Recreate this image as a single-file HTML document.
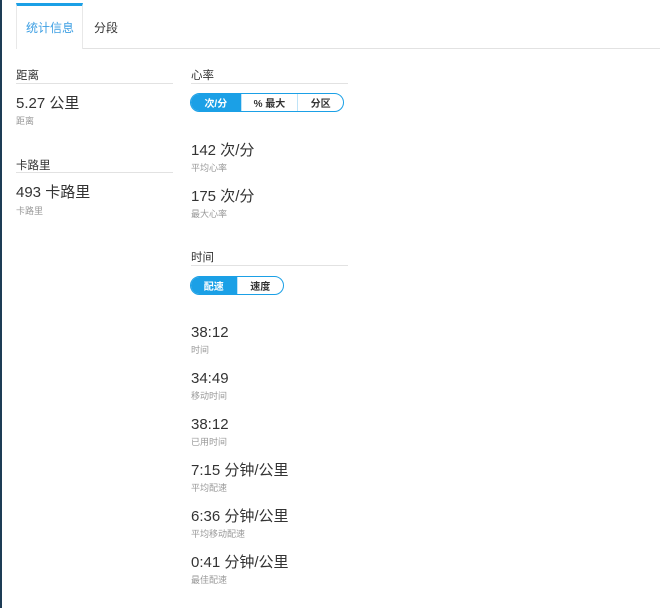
<!DOCTYPE html>
<html><head><meta charset="utf-8"><style>
*{margin:0;padding:0;box-sizing:border-box}
body{width:660px;height:608px;background:#fff;position:relative;overflow:hidden;font-family:"Liberation Sans","Noto Sans CJK SC",sans-serif;color:#333}
.a{position:absolute;white-space:nowrap}
.h{font-size:11.5px;color:#333;line-height:14px}
.ln{position:absolute;height:1px;background:#e2e2e2}
.v{font-size:15px;color:#333;line-height:18px}
.l{font-size:9px;color:#999;line-height:12px}
.seg{position:absolute;display:flex;border:1px solid #1ba0e6;border-radius:10px;overflow:hidden;font-size:10px;font-weight:bold;color:#333}
.seg div{display:flex;align-items:center;justify-content:center;border-left:1px solid #bfe3f7}
.seg div.on{background:#1ba0e6;color:#fff;border-left:none}
</style></head><body>
<div style="position:absolute;left:0;top:0;width:2px;height:608px;background:#1d3c55"></div>
<div class="ln" style="left:16px;top:48px;width:644px"></div>
<div style="position:absolute;left:16px;top:3px;width:67px;height:46px;background:#fff;border-left:1px solid #e8e8e8;border-right:1px solid #e8e8e8;border-top:3px solid #1ba0e6"></div>
<div class="a" style="left:26px;top:19px;font-size:12px;color:#3d9fe3">统计信息</div>
<div class="a" style="left:94px;top:19px;font-size:12px;color:#333">分段</div>

<div class="a h" style="left:16px;top:69px">距离</div>
<div class="ln" style="left:16px;top:83px;width:157px"></div>
<div class="a v" style="left:16px;top:95px">5.27 公里</div>
<div class="a l" style="left:16px;top:115px">距离</div>

<div class="a h" style="left:16px;top:159px">卡路里</div>
<div class="ln" style="left:16px;top:172px;width:157px"></div>
<div class="a v" style="left:16px;top:184px">493 卡路里</div>
<div class="a l" style="left:16px;top:205px">卡路里</div>

<div class="a h" style="left:191px;top:69px">心率</div>
<div class="ln" style="left:191px;top:83px;width:157px"></div>
<div class="seg" style="left:190px;top:93px;width:154px;height:19px">
<div class="on" style="width:50px">次/分</div><div style="width:57px">% 最大</div><div style="width:46px">分区</div></div>
<div class="a v" style="left:191px;top:142px">142 次/分</div>
<div class="a l" style="left:191px;top:162px">平均心率</div>
<div class="a v" style="left:191px;top:188px">175 次/分</div>
<div class="a l" style="left:191px;top:208px">最大心率</div>

<div class="a h" style="left:191px;top:251px">时间</div>
<div class="ln" style="left:191px;top:265px;width:157px"></div>
<div class="seg" style="left:190px;top:276px;width:94px;height:19px">
<div class="on" style="width:46px">配速</div><div style="width:47px">速度</div></div>

<div class="a v" style="left:191px;top:324px">38:12</div>
<div class="a l" style="left:191px;top:344px">时间</div>
<div class="a v" style="left:191px;top:370px">34:49</div>
<div class="a l" style="left:191px;top:390px">移动时间</div>
<div class="a v" style="left:191px;top:416px">38:12</div>
<div class="a l" style="left:191px;top:436px">已用时间</div>
<div class="a v" style="left:191px;top:462px">7:15 分钟/公里</div>
<div class="a l" style="left:191px;top:482px">平均配速</div>
<div class="a v" style="left:191px;top:508px">6:36 分钟/公里</div>
<div class="a l" style="left:191px;top:528px">平均移动配速</div>
<div class="a v" style="left:191px;top:554px">0:41 分钟/公里</div>
<div class="a l" style="left:191px;top:574px">最佳配速</div>
</body></html>
